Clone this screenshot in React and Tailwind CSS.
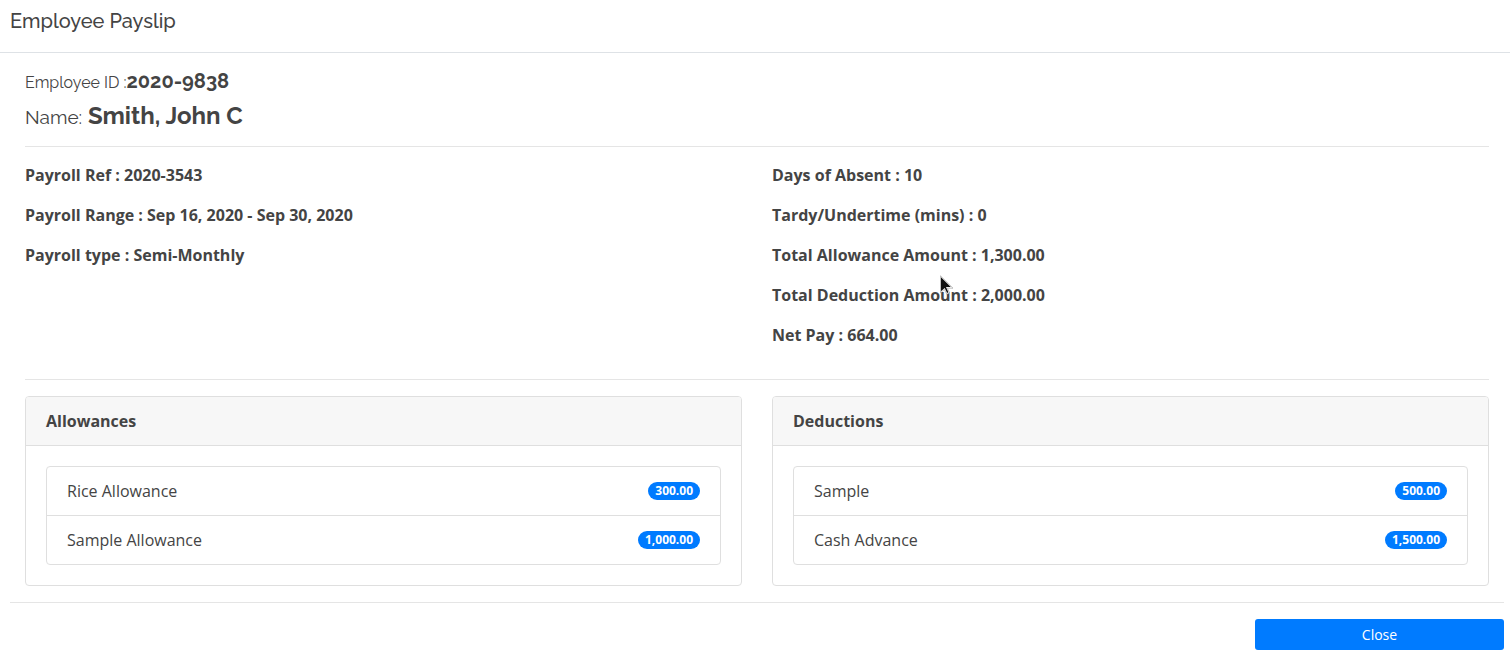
const details = [
  ['Payroll Ref : 2020-3543', 'Payroll Range : Sep 16, 2020 - Sep 30, 2020', 'Payroll type : Semi-Monthly'],
  [
    'Days of Absent : 10',
    'Tardy/Undertime (mins) : 0',
    'Total Allowance Amount : 1,300.00',
    'Total Deduction Amount : 2,000.00',
    'Net Pay : 664.00',
  ],
];

const cards = [
  { title: 'Allowances', items: [['Rice Allowance', '300.00'], ['Sample Allowance', '1,000.00']] },
  { title: 'Deductions', items: [['Sample', '500.00'], ['Cash Advance', '1,500.00']] },
];

function Card({ title, items }) {
  return (
    <section className="rounded border border-[#dfdfdf]">
      <h2 className="rounded-t-[3px] border-b border-[#dfdfdf] bg-[#f7f7f7] px-5 py-3 font-bold">{title}</h2>
      <div className="p-5">
        <ul className="divide-y divide-[#dfdfdf] rounded border border-[#dfdfdf]">
          {items.map(([label, amount]) => (
            <li key={label} className="flex items-center justify-between px-5 py-3">
              {label}
              <span className="rounded-full bg-[#007bff] px-[7px] py-[3px] text-xs leading-3 font-bold text-white">
                {amount}
              </span>
            </li>
          ))}
        </ul>
      </div>
    </section>
  );
}

function Cursor() {
  return (
    <svg className="pointer-events-none absolute top-[275px] left-[940px]" width="14" height="20" viewBox="0 0 14 20" aria-hidden="true">
      <path d="M.5 .8v17l3.900-3.400 2.300 4.800 2.900-1.300-2.200-4.700h5.600z" fill="#fff" stroke="#999" strokeWidth=".6" />
      <path d="M1 2.200v14.100l3.700-3.400 2.400 5 1.300-.6-2.400-5.200h4.800z" fill="#111" />
    </svg>
  );
}

export default function App() {
  return (
    <main className="relative bg-white font-['Open_Sans',sans-serif] text-base leading-6 text-[#444]">
      <header className="border-b border-[#dee2e6] px-[10px] pt-2 pb-[18px]">
        <h1 className="font-[Raleway,Lato,sans-serif] text-xl leading-[26px] font-medium">Employee Payslip</h1>
      </header>
      <div className="pt-4 pr-[21px] pl-[25px]">
        <div className="font-[Raleway,Lato,sans-serif]">
          <p className="text-xl leading-6 font-bold">
            <span className="text-base leading-none font-normal">Employee ID :</span>2020-9838
          </p>
          <p className="mt-2 text-2xl leading-[29px] font-bold">
            <span className="text-[19px] leading-none font-normal">Name:</span> Smith, John C
          </p>
        </div>
        <hr className="my-4 border-[#e5e5e5]" />
        <div className="grid grid-cols-2 gap-[30px] pb-4">
          {details.map((lines) => (
            <div key={lines[0]} className="space-y-4 font-bold">
              {lines.map((line) => (
                <p key={line}>{line}</p>
              ))}
            </div>
          ))}
        </div>
        <hr className="my-4 border-[#e5e5e5]" />
        <div className="grid grid-cols-2 gap-[30px]">
          {cards.map((card) => (
            <Card key={card.title} {...card} />
          ))}
        </div>
      </div>
      <footer className="mt-4 mr-[6px] ml-[10px] border-t border-[#e5e5e5] pt-4">
        <button type="button" className="ml-auto block h-[31px] w-1/6 rounded-[3px] bg-[#007bff] text-sm text-white">
          Close
        </button>
      </footer>
      <Cursor />
    </main>
  );
}
